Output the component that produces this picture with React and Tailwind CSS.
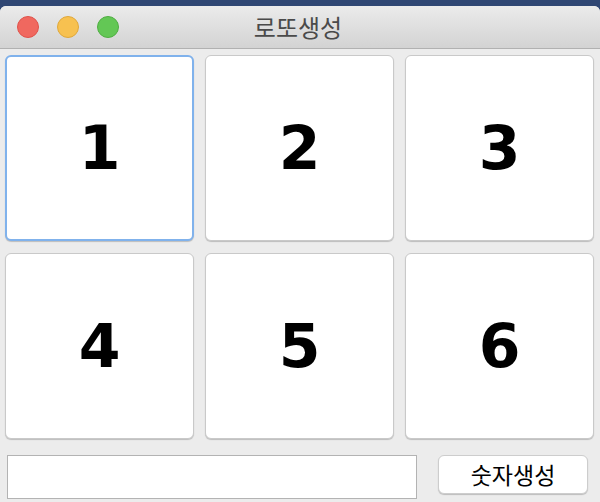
import React from 'react';

const nums = [1, 2, 3, 4, 5, 6];

export default function App() {
  return (
    <div className="w-[600px] h-[502px] bg-[#2f4673] pt-[6px] overflow-hidden" style={{ fontFamily: '"Noto Sans CJK KR", "Noto Sans", sans-serif' }}>
      <div className="h-[496px] rounded-t-[6px] bg-[#ececec] flex flex-col overflow-hidden">
        <div className="relative h-[43px] shrink-0 bg-gradient-to-b from-[#ebebeb] to-[#d3d3d3] border-b border-[#b1b1b1] flex items-center justify-center">
          <div className="absolute left-[17px] top-[10px] flex gap-[18px]">
            <span className="w-[22px] h-[22px] rounded-full bg-[#f0685f] border border-[#e0524a]" />
            <span className="w-[22px] h-[22px] rounded-full bg-[#f7c150] border border-[#e0a83a]" />
            <span className="w-[22px] h-[22px] rounded-full bg-[#63c755] border border-[#4fae42]" />
          </div>
          <span className="text-[24px] text-[#4a4a4a] leading-none ml-[-4px]">로또생성</span>
        </div>
        <div className="grid grid-cols-[189px_189px_189px] grid-rows-[186px_186px] gap-x-[11px] gap-y-[12px] pl-[5px] pt-[6px]">
          {nums.map((n, i) => (
            <div
              key={n}
              className={`bg-white rounded-[6px] flex items-center justify-center shadow-[0_1px_1px_rgba(0,0,0,0.2)] ${
                i === 0 ? 'border-2 border-[#80b2ec]' : 'border border-[#c9c9c9]'
              }`}
            >
              <span className="text-[60px] font-bold text-black leading-none" style={{ fontFamily: '"DejaVu Sans", sans-serif' }}>
                {n}
              </span>
            </div>
          ))}
        </div>
        <div className="flex items-start pl-[7px] pt-[16px]">
          <div className="w-[410px] h-[44px] bg-white border border-[#b3b3b3]" />
          <button className="ml-[21px] w-[150px] h-[39px] bg-white rounded-[6px] border border-[#cdcdcd] shadow-[0_1px_1px_rgba(0,0,0,0.2)] text-[23px] text-black leading-none">
            숫자생성
          </button>
        </div>
      </div>
    </div>
  );
}
